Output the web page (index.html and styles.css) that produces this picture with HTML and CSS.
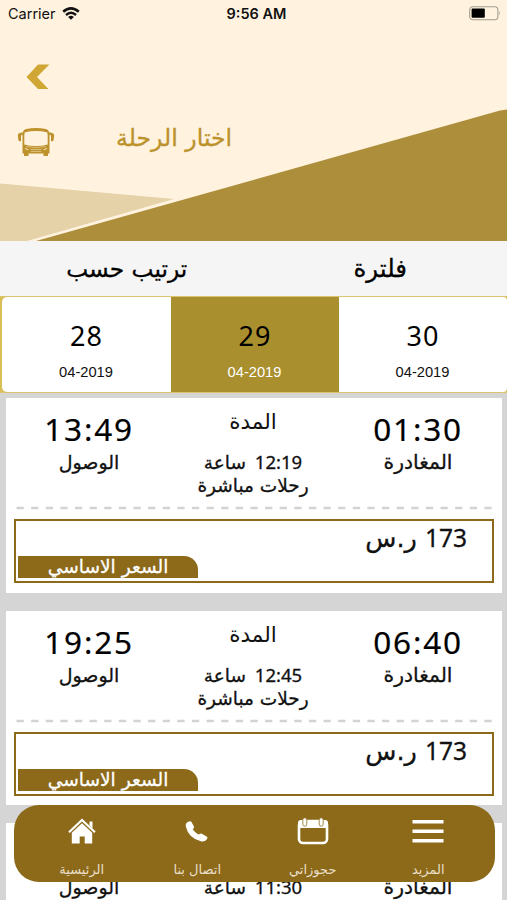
FILE: index.html
```html
<!DOCTYPE html>
<html lang="ar" dir="rtl">
<head>
<meta charset="utf-8">
<title>اختار الرحلة</title>
<link rel="stylesheet" href="styles.css">
</head>
<body>
<div class="screen">
  <header class="hero">
    <svg class="hero-art" viewBox="0 0 507 241" aria-hidden="true">
      <path fill="#e5d2a9" d="M0 183.500L174 199L27 241H0z"/>
      <path fill="#ad8e3b" d="M36 241L500 110.500L507 109.500V241z"/>
    </svg>
    <div class="status" dir="ltr">
      <div class="carrier"><span>Carrier</span>
        <svg width="18" height="13" viewBox="0 0 18 13"><g fill="none" stroke="#111" stroke-width="2.500"><path d="M1.200 4.800Q9-2 16.800 4.800"/><path d="M4 8Q9 3.600 14 8"/></g><path fill="#111" d="M6.100 9.900Q9 7.400 11.900 9.900L9 12.800z"/></svg>
      </div>
      <strong>9:56 AM</strong>
      <svg class="battery" width="33" height="15" viewBox="0 0 33 15"><rect x=".7" y=".7" width="28.200" height="13" rx="3.200" fill="none" stroke="#a39d90" stroke-width="1.100"/><rect x="2.600" y="2.600" width="13.200" height="9.200" rx="1" fill="#000"/><path fill="#a39d90" d="M30.200 5q1.800 2.200 0 4.600z"/></svg>
    </div>
    <svg class="back" width="24" height="26" viewBox="0 0 24 26"><path fill="#d0a735" d="M12 .6H23.400L11 13L22.400 25H12L.5 13z"/></svg>
    <div class="title-row" dir="ltr">
      <svg width="38" height="30" viewBox="0 0 38 30"><path fill="#bd922c" fill-rule="evenodd" d="M5.500 26.500V8Q5.500 3 9 1.900Q19 .2 29 1.900Q32.500 3 32.500 8V26.500H31V29H26.500V26.500H11.500V29H7V26.500zM8 5.200Q7.300 6 7.300 9V17.500Q19 20.500 30.700 17.500V9Q30.700 6 30 5.200Q19 3 8 5.200z"/><path fill="#bd922c" d="M6 5.500Q.8 5.500.8 8.500L1.500 13.500Q2 14.500 4 14.300V8.500L6 7.500zM32 5.500Q37.200 5.500 37.200 8.500L36.500 13.500Q36 14.500 34 14.300V8.500L32 7.500z"/><path fill="none" stroke="#fff1dc" stroke-width=".8" d="M8 21.500l3.500 1.200M30 21.500l-3.500 1.200"/><path fill="none" stroke="#e3c88d" stroke-width=".8" d="M13.500 22.500h11M14 24.500h10M9 19.500Q19 21.500 29 19.500"/></svg>
      <h1 class="ar" dir="rtl">اختار الرحلة</h1>
    </div>
  </header>
  <nav class="tools">
    <span class="ar filter">فلترة</span>
    <span class="ar sort">ترتيب حسب</span>
  </nav>
  <section class="dates">
    <div class="date"><b>30</b><small>04-2019</small></div>
    <div class="date active"><b>29</b><small>04-2019</small></div>
    <div class="date"><b>28</b><small>04-2019</small></div>
  </section>
  <main class="trips">
    <article class="trip">
      <div class="info">
        <div class="stop"><time>01:30</time><span class="ar label depart">المغادرة</span></div>
        <div class="duration"><span class="ar heading">المدة</span><span class="ar label"><i>12:19</i> ساعة</span><span class="ar label direct">رحلات مباشرة</span></div>
        <div class="stop"><time>13:49</time><span class="ar label">الوصول</span></div>
      </div>
      <svg class="dash" width="480" height="4"><path d="M2.500 2H478" stroke="#d3d3d3" stroke-width="2.400" stroke-dasharray="7.300 7.320"/></svg>
      <div class="fare"><div class="ar price"><i>173</i> ر.س</div><div class="tag"><span class="ar">السعر الاساسي</span></div></div>
    </article>
    <article class="trip">
      <div class="info">
        <div class="stop"><time>06:40</time><span class="ar label depart">المغادرة</span></div>
        <div class="duration"><span class="ar heading">المدة</span><span class="ar label"><i>12:45</i> ساعة</span><span class="ar label direct">رحلات مباشرة</span></div>
        <div class="stop"><time>19:25</time><span class="ar label">الوصول</span></div>
      </div>
      <svg class="dash" width="480" height="4"><path d="M2.500 2H478" stroke="#d3d3d3" stroke-width="2.400" stroke-dasharray="7.300 7.320"/></svg>
      <div class="fare"><div class="ar price"><i>173</i> ر.س</div><div class="tag"><span class="ar">السعر الاساسي</span></div></div>
    </article>
    <article class="trip">
      <div class="info">
        <div class="stop"><time></time><span class="ar label depart">المغادرة</span></div>
        <div class="duration"><span class="ar heading"></span><span class="ar label"><i>11:30</i> ساعة</span></div>
        <div class="stop"><time></time><span class="ar label">الوصول</span></div>
      </div>
    </article>
  </main>
  <nav class="tabbar">
    <a class="tab"><svg width="34" height="30" viewBox="0 0 34 30"><path stroke="#fff" stroke-width="3.600" d="M1.500 4.800H32.500M1.500 14.300H32.500M1.500 23.800H32.500"/></svg><span class="ar">المزيد</span></a>
    <a class="tab"><svg width="34" height="30" viewBox="0 0 34 30"><rect x="3" y="4" width="28" height="22" rx="4" fill="none" stroke="#fff" stroke-width="2.600"/><path fill="#fff" d="M2 11V6Q2 3 5 3H29Q32 3 32 6V11z"/><g fill="#fff" stroke="#8c6a1a" stroke-width=".8"><rect x="6.800" y=".8" width="4" height="8.400" rx="2"/><rect x="23.200" y=".8" width="4" height="8.400" rx="2"/></g></svg><span class="ar">حجوزاتي</span></a>
    <a class="tab"><svg width="34" height="30" viewBox="0 0 34 30"><path fill="#fff" d="M7.200 5.200L9.800 4.300Q11 4 11.600 5.200L14 9.500Q14.400 10.600 13.500 11.400L12.600 12.300Q14.800 15.400 18.300 17.400L20 16.700Q20.900 16.300 21.900 16.800L26.900 19.700Q27.900 20.400 27.300 21.500Q25.500 24.900 21.500 24.500Q8.500 21.500 5.800 9.500Q5.200 6.500 7.200 5.200z"/></svg><span class="ar">اتصال بنا</span></a>
    <a class="tab"><svg width="34" height="30" viewBox="0 0 34 30"><path fill="none" stroke="#fff" stroke-width="2.200" d="M4 15.300L17 3L30 15.300"/><path fill="#fff" d="M24.500 4.500h3v7l-3-3zM6.800 15.700L17 6.300L27.200 15.700V26.500H19.700V19.500H14.700V26.500H6.800z"/></svg><span class="ar">الرئيسية</span></a>
  </nav>
</div>
</body>
</html>
```
FILE: styles.css
```css
* { box-sizing: border-box; }
body { margin: 0; }
.screen { position: relative; width: 507px; height: 900px; overflow: hidden; background: #d5d5d5; font-family: "Noto Sans", "DejaVu Sans", sans-serif; color: #111; }
.ar { font-family: "DejaVu Sans", sans-serif; white-space: nowrap; -webkit-text-stroke: .3px currentColor; }
i, time { font-family: "Noto Sans", sans-serif; font-style: normal; }
svg { display: block; flex: none; }

.hero { position: relative; height: 241px; background: #fff3df; }
.hero-art { position: absolute; inset: 0; width: 507px; height: 241px; }
.status { position: relative; display: grid; grid-template-columns: 1fr 1fr 1fr; align-items: center; height: 27px; padding: 0 5px 0 8px; font: 14.500px/27px Inter, sans-serif; }
.carrier { display: flex; align-items: center; gap: 6px; }
.status strong { font-weight: 600; text-align: center; padding-left: 3px; }
.battery { justify-self: end; }
.back { position: relative; margin: 37px auto 0 26px; }
.title-row { position: relative; display: flex; align-items: center; margin: 37px 0 0 17px; height: 30px; }
.title-row h1 { margin: -8px 0 0 61px; font-size: 23.600px; line-height: 30px; font-weight: 400; color: #bc922c; }

.tools { display: grid; grid-template-columns: 1fr 1fr; height: 55px; background: #f5f5f5; text-align: center; font-size: 24.500px; line-height: 56px; color: #000; }
.tools .sort { font-size: 23.300px; }
.dates { display: grid; grid-template-columns: 168px 168px 1fr; height: 97px; padding: 0 0 0 2px; border: solid #d9c56d; border-width: 1px 0; background: #d9bf57; }
.date { display: flex; flex-direction: column; align-items: center; background: #fff; padding-top: 19px; }
.date:first-child { border-radius: 0 4px 4px 0; }
.date:last-child { border-radius: 5px 0 0 5px; }
.date b { font-size: 27px; line-height: 40px; font-weight: 400; letter-spacing: 1px; color: #000; }
.date small { margin: 7px 1px 0 0; font: 14.700px/18px "Liberation Sans", sans-serif; }
.date.active { background: #a98f2e; }
.date.active small { color: #fff; }

.trips { display: flex; flex-direction: column; gap: 18px; padding: 5px 5px 0 6px; }
.trip { height: 194.500px; flex: none; background: #fff; padding: 0 8px; }
.info { display: grid; grid-template-columns: 152px 1fr 150px; height: 108px; text-align: center; }
.stop, .duration { display: flex; flex-direction: column; align-items: center; }
time { height: 50px; padding-top: 8px; font-size: 31.500px; line-height: 46px; letter-spacing: 1.800px; color: #000; -webkit-text-stroke: .2px currentColor; }
.label { font-size: 18.500px; line-height: 24px; height: 24px; }
.label i { font-size: 18.500px; letter-spacing: 1.700px; margin-left: 3px; }
.stop .label { margin-top: 2px; font-size: 19px; }
.stop .depart { font-size: 20.300px; }
.heading { height: 52px; font-size: 21.500px; line-height: 48px; -webkit-text-stroke-width: 0; }
.dash { margin-bottom: 9px; }
.fare { height: 64px; border: 2px solid #8c6a1a; padding: 0 25px 0 2px; display: flex; flex-direction: column; }
.price { font-size: 25.500px; line-height: 34px; height: 35px; }
.price i { font-size: 24.500px; letter-spacing: 1.700px; }
.tag { align-self: flex-end; width: 180px; height: 22px; border-radius: 0 14px 0 0; background: #8c6a1a; color: #fff; text-align: center; font-size: 18.600px; line-height: 20px; }

.tabbar { position: absolute; left: 14px; top: 805px; width: 481px; height: 77px; border-radius: 25px; display: grid; grid-template-columns: repeat(4, 1fr); padding: 12px 9px 0 10px; background: #8c6a1a; color: #eadfc8; }
.tab { display: flex; flex-direction: column; align-items: center; }
.tab span { margin-top: 13px; font-size: 13px; line-height: 20px; -webkit-text-stroke-width: 0; }
```
